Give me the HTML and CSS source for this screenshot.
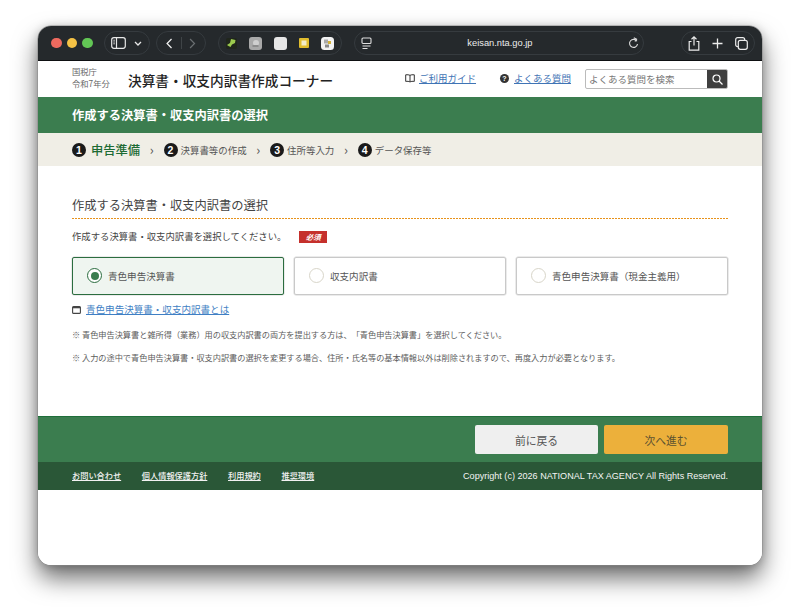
FILE: index.html
```html
<!DOCTYPE html>
<html lang="ja">
<head>
<meta charset="utf-8">
<title>keisan.nta.go.jp</title>
<link rel="stylesheet" href="styles.css">
</head>
<body>
<div class="window">
  <div class="chrome">
    <div class="lights"><i class="light red"></i><i class="light yellow"></i><i class="light green"></i></div>
    <div class="pill pill-side">
      <svg width="15" height="12" viewBox="0 0 15 12" fill="none" stroke="#e8e8e8" stroke-width="1.2"><rect x=".7" y=".7" width="13.6" height="10.6" rx="2.2"/><path d="M5.5 1v10"/><path d="M2.3 3.2h1.6M2.3 5h1.6M2.3 6.8h1.6" stroke-width=".9"/></svg>
      <svg width="8" height="5" viewBox="0 0 8 5" fill="none" stroke="#e8e8e8" stroke-width="1.3"><path d="M1 1l3 3 3-3"/></svg>
    </div>
    <div class="pill pill-nav">
      <svg width="8" height="13" viewBox="0 0 8 13" fill="none" stroke="#f0f0f0" stroke-width="1.5"><path d="M6.7 1L1.3 6.5l5.4 5.5"/></svg>
      <i class="nav-sep"></i>
      <svg width="8" height="13" viewBox="0 0 8 13" fill="none" stroke="#6a6e71" stroke-width="1.5"><path d="M1.3 1l5.4 5.5L1.3 12"/></svg>
    </div>
    <div class="pill pill-tabs">
      <svg width="11" height="11" viewBox="0 0 11 11"><rect width="11" height="11" rx="2" fill="#20261c"/><path d="M1 7l3-2 1-4 4.500 1L9 5 6 6.500 4.500 9 2.500 8z" fill="#9ccb4e"/></svg>
      <svg width="13" height="13" viewBox="0 0 13 13"><rect width="13" height="13" rx="3" fill="#a9a9a9"/><circle cx="7" cy="6" r="3" fill="#cfcfcf"/><rect x="3.500" y="8" width="6" height="2" fill="#8c8c8c"/></svg>
      <svg width="13" height="13" viewBox="0 0 13 13"><rect width="13" height="13" rx="3" fill="#e6e6e6"/></svg>
      <svg width="10" height="10" viewBox="0 0 10 10"><rect width="10" height="10" rx="1" fill="#e0bd2e"/><rect x="2.500" y="2.500" width="5" height="5" fill="#f3ecc8"/></svg>
      <svg width="13" height="13" viewBox="0 0 13 13"><rect width="13" height="13" rx="3.500" fill="#f2f2f2"/><rect x="3" y="2.500" width="4" height="4" fill="#aaa"/><rect x="7" y="4" width="3" height="3" fill="#d2b13c"/><rect x="4" y="7.500" width="4" height="3" fill="#888"/></svg>
    </div>
    <div class="pill pill-url">
      <svg class="url-icon" width="11" height="13" viewBox="0 0 11 13" fill="none" stroke="#e0e0e0" stroke-width="1.1"><rect x="1" y="1" width="9" height="5.500" rx="1"/><path d="M1.500 9h8M1.500 11.500h5"/></svg>
      <span class="url-text">keisan.nta.go.jp</span>
      <svg class="url-reload" width="11" height="12" viewBox="0 0 11 12" fill="none" stroke="#dcdcdc" stroke-width="1.1"><path d="M8.900 4.200A4 4 0 1 0 9.500 7"/><path d="M5.800 .8l2.800 1.400-1.600 2.300"/></svg>
    </div>
    <div class="pill pill-actions">
      <svg width="12" height="15" viewBox="0 0 12 15" fill="none" stroke="#ececec" stroke-width="1.2"><path d="M3.500 5.500H1.200v8.600h9.600V5.500H8.500"/><path d="M6 9.500V1M3.500 3.200L6 .9l2.500 2.300"/></svg>
      <svg width="11" height="11" viewBox="0 0 11 11" fill="none" stroke="#ececec" stroke-width="1.3"><path d="M5.500 .5v10M.5 5.500h10"/></svg>
      <svg width="13" height="13" viewBox="0 0 13 13" fill="none" stroke="#ececec" stroke-width="1.2"><rect x=".7" y=".7" width="9" height="9" rx="2"/><rect x="3.300" y="3.300" width="9" height="9" rx="2" fill="#25292c"/></svg>
    </div>
  </div>

  <main class="page">
    <header class="site-header">
      <div class="agency"><span>国税庁</span><span>令和7年分</span></div>
      <div class="site-title">決算書・収支内訳書作成コーナー</div>
      <nav class="header-links">
        <span class="hlink hlink-guide">
          <svg width="10" height="9" viewBox="0 0 10 9" fill="none" stroke="#333" stroke-width="1"><path d="M5 1.300C4 .7 2.400.6.700.8v6.600c1.700-.2 3.300-.1 4.300.6 1-.7 2.600-.8 4.300-.6V.8C7.600.6 6 .7 5 1.300zM5 1.300V8"/></svg>
          <a href="#">ご利用ガイド</a>
        </span>
        <span class="hlink hlink-faq">
          <span class="qmark">?</span>
          <a href="#">よくある質問</a>
        </span>
      </nav>
      <form class="search">
        <span class="search-input">よくある質問を検索</span>
        <span class="search-btn">
          <svg width="11" height="11" viewBox="0 0 11 11" fill="none" stroke="#fff" stroke-width="1.2"><circle cx="4.500" cy="4.500" r="3.500"/><path d="M7 7l3.500 3.500"/></svg>
        </span>
      </form>
    </header>

    <div class="title-bar"><h1>作成する決算書・収支内訳書の選択</h1></div>

    <ol class="steps">
      <li class="step step-current"><span class="num">1</span><span>申告準備</span></li>
      <li class="chev">›</li>
      <li class="step"><span class="num">2</span><span>決算書等の作成</span></li>
      <li class="chev">›</li>
      <li class="step"><span class="num">3</span><span>住所等入力</span></li>
      <li class="chev">›</li>
      <li class="step"><span class="num">4</span><span>データ保存等</span></li>
    </ol>

    <section class="content">
      <h2 class="section-title">作成する決算書・収支内訳書の選択</h2>
      <p class="prompt"><span>作成する決算書・収支内訳書を選択してください。</span><span class="required">必須</span></p>
      <div class="options">
        <label class="option option-on"><i class="radio radio-on"></i><span>青色申告決算書</span></label>
        <label class="option"><i class="radio"></i><span>収支内訳書</span></label>
        <label class="option"><i class="radio"></i><span>青色申告決算書（現金主義用）</span></label>
      </div>
      <p class="more">
        <svg width="9" height="9" viewBox="0 0 9 9" fill="none" stroke="#444" stroke-width="1.1"><rect x=".6" y="1.600" width="7.800" height="6.800" rx="1"/><path d="M.6 2.500h7.800" stroke-width="1.6"/></svg>
        <a href="#">青色申告決算書・収支内訳書とは</a>
      </p>
      <p class="note">※ 青色申告決算書と雑所得（業務）用の収支内訳書の両方を提出する方は、「青色申告決算書」を選択してください。</p>
      <p class="note">※ 入力の途中で青色申告決算書・収支内訳書の選択を変更する場合、住所・氏名等の基本情報以外は削除されますので、再度入力が必要となります。</p>
    </section>

    <div class="action-bar">
      <button class="btn btn-back" type="button">前に戻る</button>
      <button class="btn btn-next" type="button">次へ進む</button>
    </div>
    <footer class="site-footer">
      <nav class="footer-links">
        <a href="#">お問い合わせ</a>
        <a href="#">個人情報保護方針</a>
        <a href="#">利用規約</a>
        <a href="#">推奨環境</a>
      </nav>
      <small class="copyright">Copyright (c) 2026 NATIONAL TAX AGENCY All Rights Reserved.</small>
    </footer>
  </main>
</div>
</body>
</html>
```
FILE: styles.css
```css
* { box-sizing: border-box; }
html, body { margin: 0; height: 100%; background: #fff; overflow: hidden; }
body {
  padding: 26px 38px 50px;
  font-family: "Noto Sans CJK JP", "Noto Sans", sans-serif;
  color: #444;
  text-spacing-trim: space-all;
}
.window {
  height: 539px;
  border-radius: 13px;
  overflow: hidden;
  background: #fff;
  box-shadow: 0 0 0 .5px #8a8a8a, 0 13px 24px rgba(0,0,0,.58), 0 1px 10px rgba(0,0,0,.2);
  display: flex;
  flex-direction: column;
}

/* browser chrome */
.chrome {
  height: 35px;
  flex: none;
  background: #25292c;
  border-bottom: 1px solid #0e1012;
  display: flex;
  align-items: center;
  padding: 0 7px 0 13px;
}
.lights { display: flex; gap: 5px; margin-right: 11.500px; }
.light { width: 10.500px; height: 10.500px; border-radius: 50%; display: block; }
.red { background: #ee6a5f; }
.yellow { background: #f5c245; }
.green { background: #62c655; }
.pill {
  height: 24px;
  border: 1px solid #363b3f;
  border-radius: 12px;
  display: flex;
  align-items: center;
}
.pill-side { width: 46px; padding-left: 6px; gap: 8px; margin-right: 6px; }
.pill-nav { width: 50px; padding: 0 9px; gap: 8px; margin-right: 12px; }
.nav-sep { width: 1px; height: 12px; background: #3f4447; }
.pill-tabs { width: 124px; padding: 0 7px; justify-content: space-between; margin-right: 12px; }
.pill-url { width: 291px; padding: 0 4px 0 6px; justify-content: space-between; margin-right: 37px; }
.url-text {
  font-family: "Liberation Sans", sans-serif;
  font-size: 9.300px;
  color: #ececec;
}
.pill-actions { width: 74px; padding: 0 6px; justify-content: space-between; }

/* page */
.page { flex: 1; display: flex; flex-direction: column; background: #fff; }
.site-header {
  height: 36px;
  flex: none;
  display: flex;
  align-items: center;
  padding: 0 34px;
}
.agency {
  display: flex;
  flex-direction: column;
  font-size: 8.300px;
  line-height: 12px;
  color: #666;
  width: 56px;
  padding-bottom: 4px;
}
.site-title { font-size: 13.680px; font-weight: 500; color: #222; width: 277px; white-space: nowrap; padding-top: 2px; }
.header-links { display: flex; font-size: 9.500px; padding-bottom: 2px; }
.hlink { display: flex; align-items: center; gap: 4px; }
.hlink-guide { width: 95px; }
.hlink-faq { width: 85px; gap: 5px; }
.hlink a { color: #3f74b5; }
.qmark {
  width: 9px; height: 9px; border-radius: 50%;
  background: #333; color: #fff;
  font: bold 7px/9px "Liberation Sans", sans-serif;
  text-align: center;
}
.search {
  width: 143px; height: 20px;
  display: flex;
  border: 1px solid #bbb;
  border-radius: 2px;
  overflow: hidden;
  margin: 0;
}
.search-input { flex: 1; font-size: 9.500px; line-height: 19px; color: #777; padding-left: 3px; white-space: nowrap; }
.search-btn { width: 20px; background: #3f3f3f; display: flex; align-items: center; justify-content: center; }

.title-bar { height: 36px; flex: none; background: #3b7d4f; padding: 0 34px 1px; display: flex; align-items: center; }
.title-bar h1 { margin: 0; font-size: 12.250px; font-weight: 700; color: #fff; }

.steps {
  height: 33px;
  flex: none;
  margin: 0;
  padding: 0 34px;
  list-style: none;
  background: #f0eee6;
  display: flex;
  align-items: center;
  font-size: 9.450px;
  color: #555;
}
.step { display: flex; align-items: center; gap: 3px; }
.num {
  width: 14px; height: 14px; border-radius: 50%;
  background: #1a1a1a; color: #fff;
  font: bold 10.500px/14px "Liberation Sans", sans-serif;
  text-align: center;
}
.step-current { font-size: 12.250px; font-weight: 500; color: #1d6b34; gap: 5px; }
.chev { width: 23.500px; text-align: center; font-size: 13px; line-height: 13px; color: #555; }

.content { flex: 1; padding: 29px 34px 0; }
.section-title {
  margin: 0;
  font-size: 12.250px;
  font-weight: 400;
  line-height: 20px;
  padding-bottom: 4px;
  color: #444;
  background: repeating-linear-gradient(90deg, #e8921a 0 2px, transparent 2px 3px) left bottom / 100% 1px no-repeat;
}
.prompt { margin: 10px 0 0; display: flex; align-items: center; font-size: 9.350px; line-height: 15px; color: #444; }
.required {
  margin-left: 13px;
  width: 28px; height: 12px;
  background: #c5302c; color: #fff;
  font-size: 7.500px; font-weight: 700; font-style: italic; line-height: 12px;
  text-align: center;
}
.options { margin-top: 13px; display: grid; grid-template-columns: repeat(3, 1fr); gap: 10px; }
.option {
  height: 38px;
  border: 1px solid #c9c9c9;
  border-radius: 2px;
  box-shadow: 0 0 0 .5px #d8d8d8;
  display: flex;
  align-items: center;
  gap: 6px;
  padding: 0 0 1px 14px;
  font-size: 9.550px;
  color: #555;
}
.option-on { background: #eff5f0; border-color: #2b6d3f; }
.radio { width: 15px; height: 15px; border: 1px solid #d8d5c9; border-radius: 50%; background: #fff; }
.radio-on { border: 1.500px solid #2b6d3f; display: flex; align-items: center; justify-content: center; }
.radio-on::after { content: ""; width: 8px; height: 8px; border-radius: 50%; background: #3b7d4f; }
.more { margin: 7px 0 0; display: flex; align-items: center; gap: 5px; font-size: 9.550px; line-height: 15px; }
.more a { color: #3f7fc4; }
.note { margin: 11px 0 0; font-size: 8.190px; line-height: 14px; color: #5c5c5c; white-space: nowrap; }
.note + .note { margin-top: 9px; }

.action-bar {
  height: 46px;
  flex: none;
  background: #3b7d4f;
  border-top: 1px solid #1f6e3a;
  display: flex;
  justify-content: flex-end;
  gap: 6px;
  padding: 8px 34px 0;
}
.btn {
  width: 124px; height: 29px;
  border: 0;
  border-radius: 2px;
  font-family: inherit;
  font-size: 10.800px;
  color: #555;
  padding: 0;
}
.btn-back { background: #efefef; width: 123px; }
.btn-next { background: #ecb03b; color: #5c5230; }

.site-footer {
  height: 28px;
  flex: none;
  margin-bottom: 75px;
  background: #2a5737;
  display: flex;
  align-items: center;
  justify-content: space-between;
  padding: 0 34px;
  color: #fff;
}
.footer-links { display: flex; gap: 20.700px; font-size: 8.200px; font-weight: 500; padding-bottom: 2px; }
.footer-links a { color: #f2f2f2; }
.copyright { font-family: "Liberation Sans", sans-serif; font-size: 9.070px; color: #f4f4f4; }
```
